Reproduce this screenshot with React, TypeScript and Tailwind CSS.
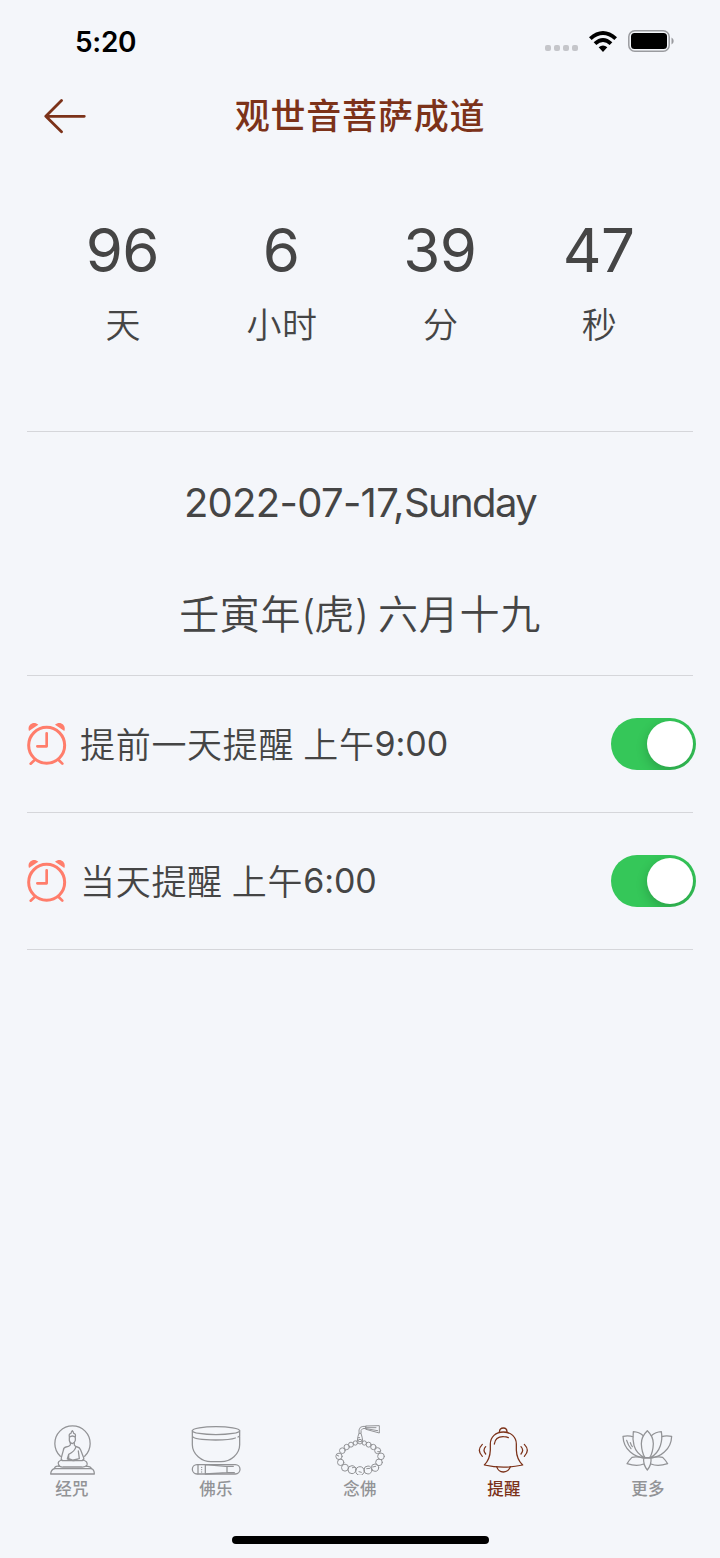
import { useState, type ReactNode } from 'react'
import clsx from 'clsx'

const countdown = [
  { value: '96', unit: '天' },
  { value: '6', unit: '小时' },
  { value: '39', unit: '分' },
  { value: '47', unit: '秒' },
]

function StatusBar() {
  return (
    <div className="flex h-[82px] items-center justify-between pl-[75px] pr-[46px] text-black">
      <span className="pt-[1px] text-[28px] font-semibold leading-none tracking-[-0.3px]">5:20</span>
      <div className="flex items-center">
        <div className="mr-[11px] mt-[14px] flex gap-[3px]">
          {[0, 1, 2, 3].map(i => (
            <span key={i} className="size-[6px] rounded-[2px] bg-[#c5c6ca]" />
          ))}
        </div>
        <svg width="28" height="21" viewBox="0 0 84 63" className="mr-[11px]">
          <path d="M0 19Q42-19 84 19L76 27Q42-3 8 27ZM14 34Q42 8 70 34L62 42Q42 24 22 42ZM29 49Q42 38 55 49L42 63Z" />
        </svg>
        <svg width="46" height="22" viewBox="0 0 46 22">
          <rect x="0.8" y="0.8" width="40.4" height="20.4" rx="6" fill="none" stroke="#9a9b9f" strokeWidth="1.5" />
          <rect x="3" y="3" width="36" height="16" rx="3.5" />
          <path d="M43.5 7.5q2.2 1 2.2 3.5t-2.2 3.5z" fill="#9a9b9f" />
        </svg>
      </div>
    </div>
  )
}

function Header() {
  return (
    <header className="grid h-[68px] grid-cols-[100px_1fr_100px] items-center text-[#7c3219]">
      <button className="pl-[44px]" aria-label="back">
        <svg width="42" height="36" viewBox="0 0 42 36" fill="none" stroke="currentColor" strokeWidth="2.8" strokeLinecap="round" strokeLinejoin="round">
          <path d="M17.5 2.5 1.8 18.3l15.7 15.5M1.8 18.3h38.5" />
        </svg>
      </button>
      <h1 className="whitespace-nowrap text-center text-[35px] font-medium leading-none tracking-[0.8px]">观世音菩萨成道</h1>
    </header>
  )
}

function AlarmIcon() {
  return (
    <svg width="40" height="44" viewBox="0 0 120 132" fill="none" stroke="#ff7d6b" strokeWidth="9" strokeLinecap="round" strokeLinejoin="round">
      <circle cx="59" cy="70" r="54" />
      <path d="M59 34v39H31M23 114l-12 11M95 114l11 11" strokeWidth="8" />
      <path d="M6 27C-1 8 20-5 34 8ZM112 27C119 8 98-5 84 8Z" fill="#ff7d6b" stroke="none" />
    </svg>
  )
}

function ReminderRow({ label, time }: { label: string; time: string }) {
  const [on, setOn] = useState(true)

  return (
    <div className="flex h-[137px] items-center border-b border-[#d5d6da]">
      <AlarmIcon />
      <div className="ml-[13px] flex flex-1 items-center pt-[2px] text-[35px] font-[350] leading-none tracking-[0.7px]">
        <span className="mr-[9px]">{label}</span>
        <span>上午</span>
        <span className="pb-[2px] text-[34px] font-normal tracking-[-0.1px]">{time}</span>
      </div>
      <button
        role="switch"
        aria-checked={on}
        onClick={() => setOn(!on)}
        className={clsx(
          'mr-[-3px] flex h-[52px] w-[85.5px] items-center overflow-hidden rounded-full px-[3px] transition-colors',
          on ? 'justify-end bg-[#35c759]' : 'justify-start bg-[#e2e3e7]',
        )}
      >
        <span className="size-[46px] rounded-full bg-white shadow-[0_4px_12px_rgba(0,0,0,0.2)]" />
      </button>
    </div>
  )
}

function TabItem({ label, viewBox, active, children }: { label: string; viewBox: string; active?: boolean; children: ReactNode }) {
  return (
    <button className={clsx('flex flex-col items-center', active ? 'text-[#7c3219]' : 'text-[#929396]')}>
      <svg width="60" height="55" viewBox={viewBox} fill="none" stroke="currentColor" strokeWidth="3.8" strokeLinecap="round" strokeLinejoin="round">
        {children}
      </svg>
      <span className="mt-[6px] text-[16.5px] font-medium leading-none tracking-[0.3px]">{label}</span>
    </button>
  )
}

// bead centres and radii of the mala, clockwise from the knot
const beads = [
  [135, 93, 7], [148, 97, 6.5], [161, 102, 7.5], [175, 109, 8], [188, 120, 9], [198, 137, 10], [192, 155, 10],
  [180, 171, 11], [159, 178, 12], [135, 181, 13], [111, 177, 12], [90, 171, 10.5], [77, 155, 9.5],
  [72, 137, 9.5], [82, 120, 8.5], [95, 109, 8], [108, 102, 7.5], [121, 97, 6.5],
]

function TabBar() {
  return (
    <nav className="grid h-[138px] grid-cols-5 items-start">
      <TabItem label="经咒" viewBox="37 28 180 165">
        <path d="M92 137A53 53 0 1 1 165 137" />
        <path d="M119 78q-2-9 5-10q1-5 4-8q3 3 4 8q7 1 5 10v11q-2 8-9 10q-8-2-9-10ZM119 80q9-8 18 0" />
        <path d="M122 97v6q-3 5-13 6-7 1-8 10l-6 22q-2 6 3 9h60q6-3 4-9l-9-23q-3-8-10-9-7-1-9-6v-6" />
        <path d="M139 108q-4 15-22 23v13l12 4 20-4-3-23M117 131l-4 14M113 145q14 8 30 3M96 148q-14 4-9 14 3 8 14 7h54q13 1 17-6 3-11-12-15M88 167q-12-2-14 7M171 167q12-1 14 7" />
        <path d="M74 174h111q9 3 9 16H63q1-13 11-16Z" />
      </TabItem>
      <TabItem label="佛乐" viewBox="48 29 180 165">
        <ellipse cx="138" cy="61" rx="71" ry="12" />
        <path d="M67 61v42c0 28 28 51 56 51h30c29 0 56-23 56-51V61M67 78q5 11 70 11 44 0 59-6M204 80l5-3" />
        <rect x="67" y="163" width="143" height="28" rx="14" />
        <path d="M84 164v26M106 163l62 5h22M106 191l65-4h22M106 163v28M171 168v19M95 171v.2M95 178v.2M95 185v.2" />
      </TabItem>
      <TabItem label="念佛" viewBox="45 28 180 165">
        <g strokeWidth="3">
          {beads.map(([cx, cy, r]) => (
            <circle key={`${cx}-${cy}`} cx={cx} cy={cy} r={r} />
          ))}
          <path d="M127 90q1-14 5-22h6q4 12 5 22-8 7-16 0ZM132 68q-2-12 4-18 6-4 17-3M138 67q-2-10 5-13l10-1M153 46l40-1v22l-40-11ZM154 51h29M154 54l34 6M130 81h4M112 171q6-4 11 0M155 174l10-1M173 169l9-2M132 183l7 2M67 134l4 2M188 123h7" />
        </g>
      </TabItem>
      <TabItem label="提醒" viewBox="42 29 180 165" active>
        <path d="M73 164q17-17 18-45v-18c0-21 16-36 39-36s39 15 39 36v18q1 28 19 45-58 13-115 0Z" />
        <path d="M118 65q1-12 12-12t11 12M110 169q5 16 20 16t21-16M103 101q3-23 28-22 8 0 14 3M67 102q-18 18 0 36M77 109q-10 11 0 22M193 102q18 18 0 36M183 109q10 11 0 22" />
      </TabItem>
      <TabItem label="更多" viewBox="54 29 180 165">
        <path d="M142 61q-18 17-18 39 1 26 11 42h14q10-16 11-42 0-22-18-39Z" />
        <path d="M102 105q-5-20-2-41 17 1 30 12M154 76q13-11 30-12 4 22-3 42-8 24-30 36M102 105q7 25 32 37M100 80q-12-5-31-2 1 30 22 47 18 16 42 17M186 79q10-4 29-1-1 30-22 47-17 16-42 17" />
        <path d="M132 144q-22-7-36-3-11 11-15 19 30 10 50 1M152 144q22-7 36-3 11 11 15 19-30 10-50 1M131 143h22q2 20-11 36-13-16-11-36ZM80 90q5 16 13 25M91 97q2 7 6 12" />
      </TabItem>
    </nav>
  )
}

export default function App() {
  return (
    <div className="flex h-[1558px] w-[720px] flex-col bg-[#f4f6fa] font-['Inter','Noto_Sans_CJK_SC',sans-serif] text-[#454545]">
      <StatusBar />
      <Header />

      <main className="flex-1 px-[27px]">
        <section className="grid h-[282px] grid-cols-4 content-start border-b border-[#d5d6da] pl-[17px] pr-[14px] pt-[70px] text-center">
          {countdown.map(({ value, unit }) => (
            <div key={unit}>
              <div className="pr-[2px] text-[60px] leading-[60px] tracking-[-0.6px]">{value}</div>
              <div className="mt-[28px] text-[35px] font-[350] leading-[34px] tracking-[0.5px]">{unit}</div>
            </div>
          ))}
        </section>

        <section className="flex h-[244px] flex-col items-center border-b border-[#d5d6da] pt-[51px] leading-[40px]">
          <p className="whitespace-nowrap text-[40px] tracking-[-0.7px]">
            2022-07-17,<span className="tracking-[-1.6px]">Sunday</span>
          </p>
          <p className="mt-[72px] whitespace-nowrap text-[40px] font-[350] tracking-[0.7px]">
            壬寅年<span className="tracking-[-1px]">(</span>虎<span className="tracking-[-1px]">) </span>六月十九
          </p>
        </section>

        <ReminderRow label="提前一天提醒" time="9:00" />
        <ReminderRow label="当天提醒" time="6:00" />
      </main>

      <TabBar />
      <div className="mx-auto -mt-[22px] mb-[14px] h-2 w-[257px] shrink-0 rounded-full bg-black" />
    </div>
  )
}
